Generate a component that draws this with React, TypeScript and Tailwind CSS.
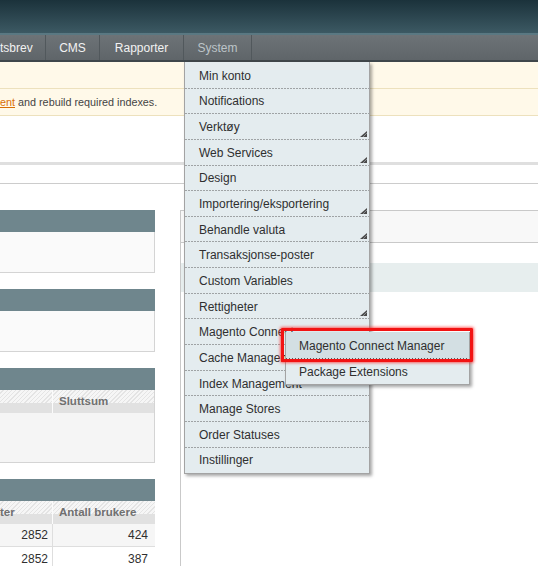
import React from 'react';

type MenuItem = { label: string; sub?: boolean };

const menuItems: MenuItem[] = [
  { label: 'Min konto' },
  { label: 'Notifications' },
  { label: 'Verktøy', sub: true },
  { label: 'Web Services', sub: true },
  { label: 'Design' },
  { label: 'Importering/eksportering', sub: true },
  { label: 'Behandle valuta', sub: true },
  { label: 'Transaksjonse-poster' },
  { label: 'Custom Variables' },
  { label: 'Rettigheter', sub: true },
  { label: 'Magento Connect', sub: true },
  { label: 'Cache Management' },
  { label: 'Index Management' },
  { label: 'Manage Stores' },
  { label: 'Order Statuses' },
  { label: 'Instillinger' },
];

const SubArrow = () => (
  <svg width="7" height="6" viewBox="0 0 7 6" className="self-end mb-[3px] shrink-0">
    <polygon points="7,0 7,6 0,6" fill="#4a4a4a" />
    <line x1="3" y1="6" x2="7" y2="2" stroke="#9aa0a3" strokeWidth="0.8" />
  </svg>
);

const PanelHead = () => <div className="h-[22px] bg-[#6f868d]" />;

const GridHead = ({ first, second }: { first: string; second: string }) => (
  <div className="flex h-[23px] bg-[image:linear-gradient(to_bottom,rgba(0,0,0,0)_55%,#e1e1e1_55%),repeating-linear-gradient(135deg,#f6f6f6_0px,#f6f6f6_2px,#e4e4e4_2px,#e4e4e4_3px)] text-[11.5px] font-bold text-[#707070]">
    <div className="w-[53px] flex items-center border-r border-[#fbfbfb]">{first}</div>
    <div className="flex-1 flex items-center pl-[6px]">{second}</div>
  </div>
);

export default function App() {
  return (
    <div className="relative w-[538px] h-[566px] overflow-hidden bg-white font-['Liberation_Sans',Arial,sans-serif] text-[12px]">
      {/* header */}
      <div className="h-[33px] bg-[linear-gradient(to_bottom,#1b323b,#3c5963)]" />
      <div className="h-[2px] bg-[#5a7882]" />
      <nav className="flex h-[27px] bg-[linear-gradient(to_bottom,#6d7377,#5f6569)] border-b-[2px] border-[#3f474b] text-[#f2f2f2]">
        <div className="w-[45px] flex items-center">tsbrev</div>
        <div className="w-px bg-[#51585c]" />
        <div className="w-[53px] flex items-center justify-center">CMS</div>
        <div className="w-px bg-[#51585c]" />
        <div className="w-[83px] flex items-center justify-center">Rapporter</div>
        <div className="w-px bg-[#51585c]" />
        <div className="w-[67px] flex items-center justify-center text-[#bcc4c8]">System</div>
        <div className="w-px bg-[#51585c]" />
      </nav>

      {/* notices */}
      <div className="h-[27px] bg-[#fff9e9] border-b border-[#ede1bd]" />
      <div className="h-[27px] bg-[#fff9e9] border-b border-[#ede1bd] flex items-center text-[10.8px] text-[#444]">
        <span className="text-[#d96f05] underline">ent</span>
        <span className="ml-[3px]">and rebuild required indexes.</span>
      </div>

      <div className="h-[46px]" />
      <div className="h-[3px] bg-[#dfdfdf]" />
      <div className="h-[18px]" />
      <div className="h-px bg-[#cccccc]" />

      {/* dashboard */}
      <div className="flex pt-[26px]">
        <div className="w-[155px] flex flex-col gap-[16px]">
          <div>
            <PanelHead />
            <div className="h-[41px] bg-[#fafafa] border-r border-b border-[#d4d4d4]" />
          </div>
          <div>
            <PanelHead />
            <div className="h-[41px] bg-[#fafafa] border-r border-b border-[#d4d4d4]" />
          </div>
          <div>
            <PanelHead />
            <div className="border-r border-[#d4d4d4]">
              <GridHead first="" second="Sluttsum" />
            </div>
            <div className="h-[50px] bg-[#f5f5f5] border-r border-b border-[#d4d4d4]" />
          </div>
          <div>
            <PanelHead />
            <GridHead first="ter" second="Antall brukere" />
            <div className="flex h-[23px] bg-[#f6f6f6] border-b border-[#dedede] text-[12px] text-[#2f2f2f]">
              <div className="w-[53px] flex items-center justify-end pr-[4px] border-r border-[#dedede]">2852</div>
              <div className="flex-1 flex items-center justify-end pr-[7px]">424</div>
            </div>
            <div className="flex h-[23px] bg-white text-[12px] text-[#2f2f2f]">
              <div className="w-[53px] flex items-center justify-end pr-[4px] border-r border-[#dedede]">2852</div>
              <div className="flex-1 flex items-center justify-end pr-[7px]">387</div>
            </div>
          </div>
        </div>
        <div className="ml-[25px] flex-1 h-[356px] border-l border-[#c9c9c9]">
          <div className="h-[33px] bg-[#f8f8f8] border-t border-b border-[#c9c9c9]" />
          <div className="h-[20px]" />
          <div className="h-[29px] bg-[#e7eeee]" />
        </div>
      </div>

      {/* System dropdown */}
      <ul className="absolute left-[184px] top-[62px] w-[186px] pt-[1px] bg-[#e4ecef] border-l border-r border-b border-[#a3a3a3] shadow-[2px_2px_3px_rgba(0,0,0,0.35)] text-[#2f2f2f]">
        {menuItems.map((item, idx) => (
          <li
            key={idx}
            className={`flex items-center justify-between h-[25.65px] pl-[14px] pr-[2px] ${
              idx < menuItems.length - 1
                ? 'bg-[image:linear-gradient(to_right,#5a5a5a_1px,transparent_1px)] bg-[length:3px_1px] bg-repeat-x bg-bottom'
                : ''
            }`}
          >
            <span className="whitespace-nowrap">{item.label}</span>
            {item.sub && <SubArrow />}
          </li>
        ))}
      </ul>

      {/* Magento Connect submenu */}
      <ul className="absolute left-[285px] top-[332px] w-[185px] bg-[#e4ecef] border-l border-r border-b border-[#a3a3a3] shadow-[2px_2px_3px_rgba(0,0,0,0.35)] text-[#2f2f2f]">
        <li className="flex items-center h-[27px] pl-[13px] bg-[#d3dfe3] bg-[image:linear-gradient(to_right,#5a5a5a_1px,transparent_1px)] bg-[length:3px_1px] bg-repeat-x bg-bottom">
          Magento Connect Manager
        </li>
        <li className="flex items-center h-[25px] pl-[13px]">Package Extensions</li>
      </ul>

      {/* highlight frame */}
      <div className="absolute left-[281px] top-[328px] w-[192px] h-[34px] border-[3px] border-[#f21313] rounded-[1px] shadow-[0_0_3px_1px_rgba(255,40,40,0.7)]" />
    </div>
  );
}
